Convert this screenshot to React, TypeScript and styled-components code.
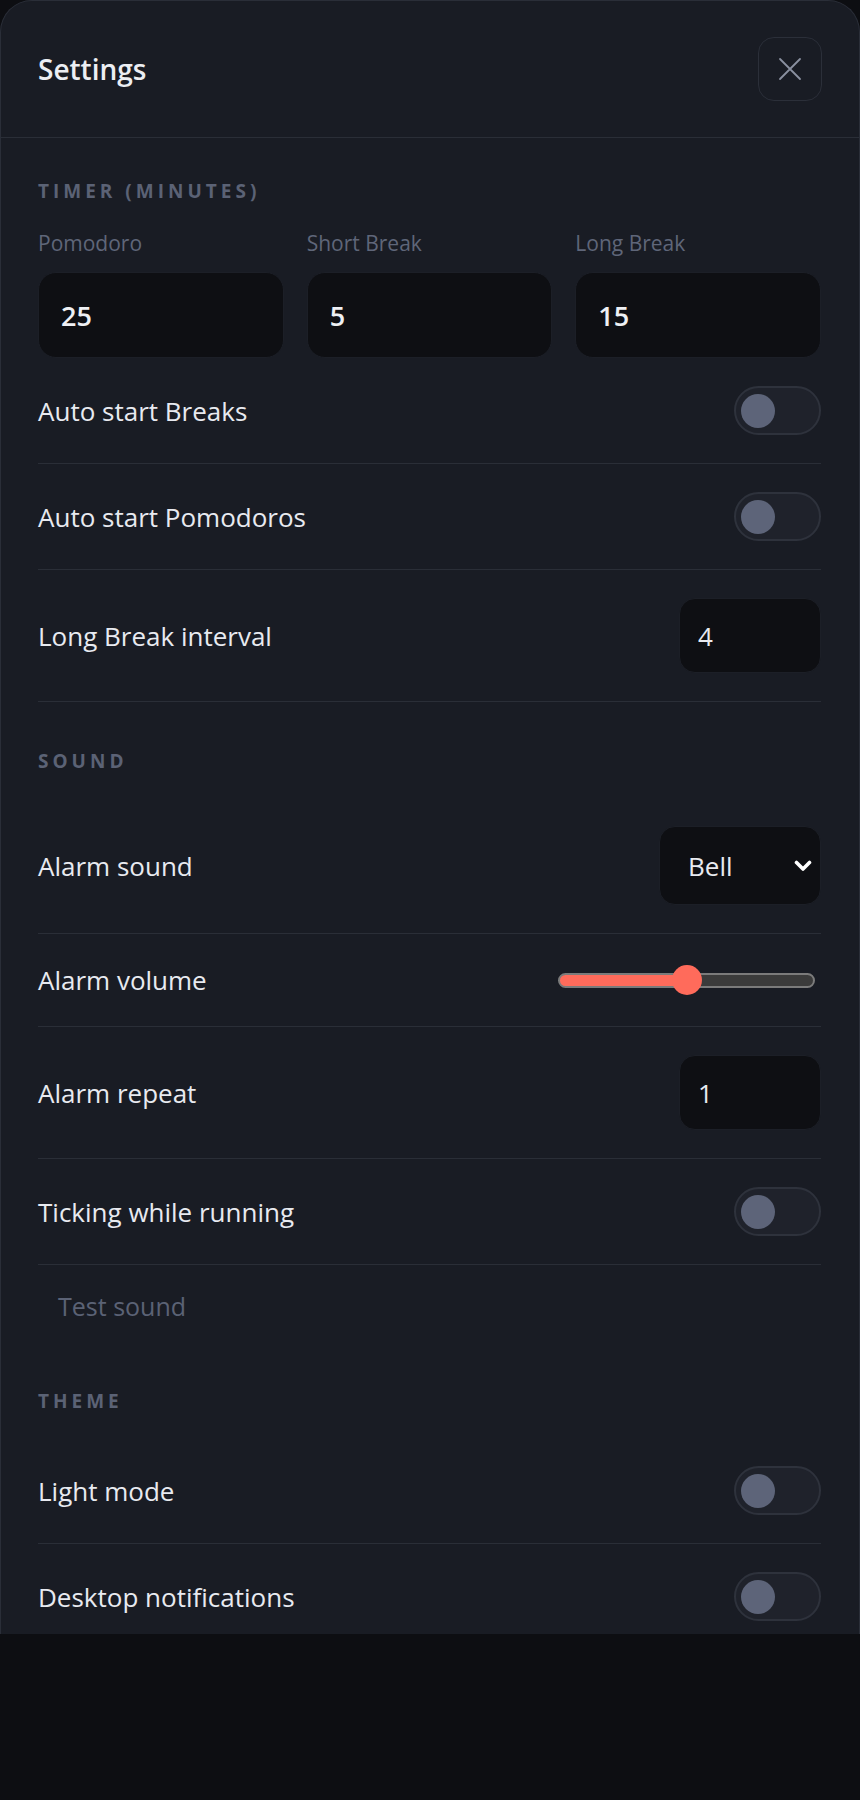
import React, { useState } from 'react';
import styled, { createGlobalStyle } from 'styled-components';

const GlobalStyle = createGlobalStyle`
  html, body {
    margin: 0;
    padding: 0;
    background: #0d0e12;
  }
  * {
    box-sizing: border-box;
  }
`;

const Panel = styled.div`
  width: 860px;
  height: 1634px;
  overflow: hidden;
  background: #191c24;
  border: 1px solid #2a2e38;
  border-bottom: none;
  border-radius: 32px 32px 0 0;
  font-family: 'Open Sans', 'Noto Sans', sans-serif;
  color: #e8eaf0;
`;

const Header = styled.header`
  display: flex;
  align-items: center;
  justify-content: space-between;
  padding: 36px 37px 36px 37px;
  border-bottom: 1px solid #2a2e37;
`;

const Title = styled.h1`
  margin: 0;
  font-size: 28px;
  font-weight: 600;
  color: #eceef3;
`;

const CloseButton = styled.button`
  width: 64px;
  height: 64px;
  display: flex;
  align-items: center;
  justify-content: center;
  background: transparent;
  border: 1.5px solid #2b2f39;
  border-radius: 16px;
  color: #8a90a0;
  cursor: pointer;
`;

const Body = styled.div`
  padding: 41px 38px 0 37px;
`;

const Section = styled.section<{ $first?: boolean }>`
  display: flow-root;
  margin-top: ${(p) => (p.$first ? '0' : '47px')};
`;

const SectionTitle = styled.h2`
  margin: 0 0 25px;
  font-size: 19px;
  line-height: 24px;
  font-weight: 700;
  letter-spacing: 4px;
  text-transform: uppercase;
  color: #5b6275;
`;

const DurationGrid = styled.div`
  display: grid;
  grid-template-columns: repeat(3, 1fr);
  gap: 23px;
`;

const Field = styled.label`
  display: flex;
  flex-direction: column;
`;

const FieldLabel = styled.span`
  font-size: 21px;
  line-height: 30px;
  color: #5f6679;
  margin-bottom: 14px;
`;

const BigInput = styled.input`
  width: 100%;
  height: 86px;
  padding: 0 22px;
  background: #0e0f13;
  border: 1px solid #1c1f27;
  border-radius: 18px;
  color: #eef0f4;
  font-family: inherit;
  font-size: 27px;
  font-weight: 600;
  outline: none;
`;

const Row = styled.div`
  display: flex;
  align-items: center;
  justify-content: space-between;
  padding: 28px 0;
  border-bottom: 1px solid #2a2e37;
`;

const RowLabel = styled.span`
  font-size: 26px;
  line-height: 36px;
  color: #e8eaf0;
`;

const SmallInput = styled.input`
  width: 142px;
  height: 75px;
  padding: 0 18px;
  background: #0e0f13;
  border: 1px solid #1c1f27;
  border-radius: 16px;
  color: #e8eaf0;
  font-family: inherit;
  font-size: 26px;
  outline: none;
`;

const Switch = styled.button<{ $on: boolean }>`
  width: 87px;
  height: 49px;
  padding: 0 5px;
  display: flex;
  align-items: center;
  justify-content: ${(p) => (p.$on ? 'flex-end' : 'flex-start')};
  background: ${(p) => (p.$on ? '#ff6b5b' : '#1f222b')};
  border: 2px solid #2e323c;
  border-radius: 999px;
  cursor: pointer;
`;

const Knob = styled.span`
  width: 34px;
  height: 34px;
  border-radius: 50%;
  background: #5d6479;
`;

const SelectWrap = styled.div`
  position: relative;
  width: 162px;
  height: 79px;
`;

const Select = styled.select`
  appearance: none;
  width: 100%;
  height: 100%;
  padding: 0 40px 0 28px;
  background: #0e0f13;
  border: 1px solid #1c1f27;
  border-radius: 16px;
  color: #e8eaf0;
  font-family: inherit;
  font-size: 26px;
  outline: none;
`;

const Chevron = styled.svg`
  position: absolute;
  right: 9px;
  top: 34px;
  pointer-events: none;
`;

const Slider = styled.input`
  appearance: none;
  -webkit-appearance: none;
  width: 257px;
  height: 30px;
  margin: 0 6px 0 0;
  background: transparent;

  &::-webkit-slider-runnable-track {
    height: 15px;
    border: 2px solid #7b7b7b;
    border-radius: 8px;
    background: linear-gradient(
      to right,
      #ff6b5b 0,
      #ff6b5b var(--fill),
      #3b3b3b var(--fill),
      #3b3b3b 100%
    );
  }

  &::-webkit-slider-thumb {
    -webkit-appearance: none;
    width: 30px;
    height: 30px;
    margin-top: -9.5px;
    border-radius: 50%;
    background: #ff6b5b;
    border: none;
  }
`;

const GhostButton = styled.button`
  display: block;
  margin: 11px 0 6px;
  padding: 12px 20px;
  background: transparent;
  border: none;
  font-family: inherit;
  font-size: 25px;
  line-height: 36px;
  color: #5b6275;
  cursor: pointer;
`;

const Toggle: React.FC<{ initial?: boolean }> = ({ initial = false }) => {
  const [on, setOn] = useState(initial);
  return (
    <Switch $on={on} onClick={() => setOn(!on)}>
      <Knob />
    </Switch>
  );
};

export default function App() {
  const [volume, setVolume] = useState(50);

  return (
    <>
      <GlobalStyle />
      <Panel>
        <Header>
          <Title>Settings</Title>
          <CloseButton aria-label='Close'>
            <svg width='24' height='24' viewBox='0 0 24 24'>
              <path
                d='M2 2 L22 22 M22 2 L2 22'
                stroke='currentColor'
                strokeWidth='1.8'
                strokeLinecap='round'
              />
            </svg>
          </CloseButton>
        </Header>

        <Body>
          <Section $first>
            <SectionTitle>Timer (minutes)</SectionTitle>
            <DurationGrid>
              <Field>
                <FieldLabel>Pomodoro</FieldLabel>
                <BigInput type='number' defaultValue={25} />
              </Field>
              <Field>
                <FieldLabel>Short Break</FieldLabel>
                <BigInput type='number' defaultValue={5} />
              </Field>
              <Field>
                <FieldLabel>Long Break</FieldLabel>
                <BigInput type='number' defaultValue={15} />
              </Field>
            </DurationGrid>
            <Row>
              <RowLabel>Auto start Breaks</RowLabel>
              <Toggle />
            </Row>
            <Row>
              <RowLabel>Auto start Pomodoros</RowLabel>
              <Toggle />
            </Row>
            <Row>
              <RowLabel>Long Break interval</RowLabel>
              <SmallInput type='number' defaultValue={4} />
            </Row>
          </Section>

          <Section>
            <SectionTitle>Sound</SectionTitle>
            <Row>
              <RowLabel>Alarm sound</RowLabel>
              <SelectWrap>
                <Select defaultValue='bell'>
                  <option value='bell'>Bell</option>
                  <option value='digital'>Digital</option>
                  <option value='kitchen'>Kitchen</option>
                </Select>
                <Chevron width='18' height='12' viewBox='0 0 18 12'>
                  <path
                    d='M2.5 2.5 L9 9 L15.5 2.5'
                    fill='none'
                    stroke='#ffffff'
                    strokeWidth='3.6'
                    strokeLinecap='round'
                    strokeLinejoin='round'
                  />
                </Chevron>
              </SelectWrap>
            </Row>
            <Row>
              <RowLabel>Alarm volume</RowLabel>
              <Slider
                type='range'
                min={0}
                max={100}
                value={volume}
                onChange={(e) => setVolume(Number(e.target.value))}
                style={{ ['--fill' as string]: `${volume}%` }}
              />
            </Row>
            <Row>
              <RowLabel>Alarm repeat</RowLabel>
              <SmallInput type='number' defaultValue={1} />
            </Row>
            <Row>
              <RowLabel>Ticking while running</RowLabel>
              <Toggle />
            </Row>
            <GhostButton>Test sound</GhostButton>
          </Section>

          <Section>
            <SectionTitle>Theme</SectionTitle>
            <Row>
              <RowLabel>Light mode</RowLabel>
              <Toggle />
            </Row>
            <Row>
              <RowLabel>Desktop notifications</RowLabel>
              <Toggle />
            </Row>
          </Section>
        </Body>
      </Panel>
    </>
  );
}
